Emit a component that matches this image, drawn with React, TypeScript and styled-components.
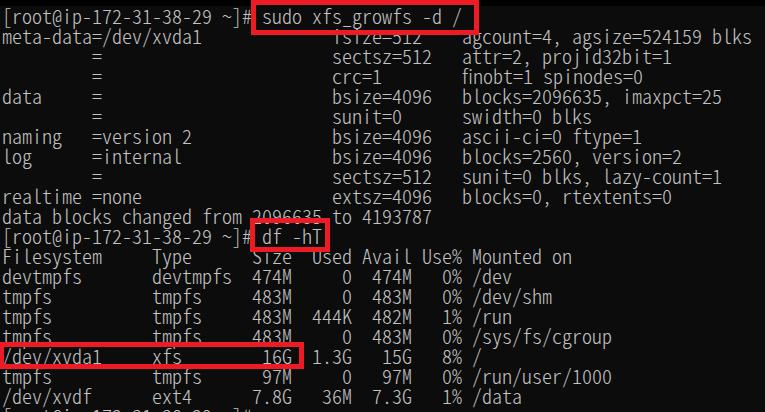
import React from "react";
import styled, { createGlobalStyle } from "styled-components";

const GlobalStyle = createGlobalStyle`
  html, body {
    margin: 0;
    padding: 0;
    background: #0c0c0c;
  }
  body {
    overflow: hidden;
  }
`;

const Window = styled.div`
  position: relative;
  width: 765px;
  height: 412px;
  overflow: hidden;
  background: #0c0c0c;
  display: flex;
  flex-direction: column;
`;

const TopStrip = styled.div`
  height: 6px;
  flex: none;
  background: #000000;
`;

const Screen = styled.div`
  padding-left: 2px;
  display: flex;
  flex-direction: column;
  font-family: "Noto Sans CJK KR", "Noto Sans Mono CJK KR", monospace;
  font-weight: 300;
  font-feature-settings: "hwid" 1;
  font-size: 20px;
  color: #c2c2c2;
`;

const Line = styled.div`
  height: 20px;
  line-height: 20px;
  white-space: pre;
  flex: none;
`;

type Inset = { t: number; r: number; b: number; l: number };

const Highlight = styled.span<{ $inset: Inset }>`
  position: relative;
  display: inline-block;
  height: 20px;
  line-height: 20px;
  vertical-align: top;
  &::after {
    content: "";
    position: absolute;
    top: ${(p) => -p.$inset.t}px;
    right: ${(p) => -p.$inset.r}px;
    bottom: ${(p) => -p.$inset.b}px;
    left: ${(p) => -p.$inset.l}px;
    border: 5px solid #ed1c24;
    pointer-events: none;
    z-index: 2;
  }
`;

const PROMPT = "[root@ip-172-31-38-29 ~]#";

const xfsLines = [
  "meta-data=/dev/xvda1             isize=512    agcount=4, agsize=524159 blks",
  "         =                       sectsz=512   attr=2, projid32bit=1",
  "         =                       crc=1        finobt=1 spinodes=0",
  "data     =                       bsize=4096   blocks=2096635, imaxpct=25",
  "         =                       sunit=0      swidth=0 blks",
  "naming   =version 2              bsize=4096   ascii-ci=0 ftype=1",
  "log      =internal               bsize=4096   blocks=2560, version=2",
  "         =                       sectsz=512   sunit=0 blks, lazy-count=1",
  "realtime =none                   extsz=4096   blocks=0, rtextents=0",
  "data blocks changed from 2096635 to 4193787",
];

const dfBefore = [
  "Filesystem     Type      Size  Used Avail Use% Mounted on",
  "devtmpfs       devtmpfs  474M     0  474M   0% /dev",
  "tmpfs          tmpfs     483M     0  483M   0% /dev/shm",
  "tmpfs          tmpfs     483M  444K  482M   1% /run",
  "tmpfs          tmpfs     483M     0  483M   0% /sys/fs/cgroup",
];

const dfAfter = [
  "tmpfs          tmpfs      97M     0   97M   0% /run/user/1000",
  "/dev/xvdf      ext4      7.8G   36M  7.3G   1% /data",
];

export default function App() {
  return (
    <>
      <GlobalStyle />
      <Window>
        <TopStrip />
        <Screen>
          <Line>
            {PROMPT}
            <Highlight $inset={{ t: 6, r: 17, b: 9, l: 1 }}> sudo xfs_growfs -d /</Highlight>
          </Line>
          {xfsLines.map((l, i) => (
            <Line key={`x${i}`}>{l}</Line>
          ))}
          <Line>
            {PROMPT}
            <Highlight $inset={{ t: 8, r: 8, b: 6, l: 2 }}> df -hT</Highlight>
          </Line>
          {dfBefore.map((l, i) => (
            <Line key={`d${i}`}>{l}</Line>
          ))}
          <Line>
            <Highlight $inset={{ t: 4, r: 12, b: 3, l: 3 }}>/dev/xvda1     xfs        16G</Highlight>
            {"  1.3G   15G   8% /"}
          </Line>
          {dfAfter.map((l, i) => (
            <Line key={`a${i}`}>{l}</Line>
          ))}
          <Line>{PROMPT + " "}</Line>
        </Screen>
      </Window>
    </>
  );
}
